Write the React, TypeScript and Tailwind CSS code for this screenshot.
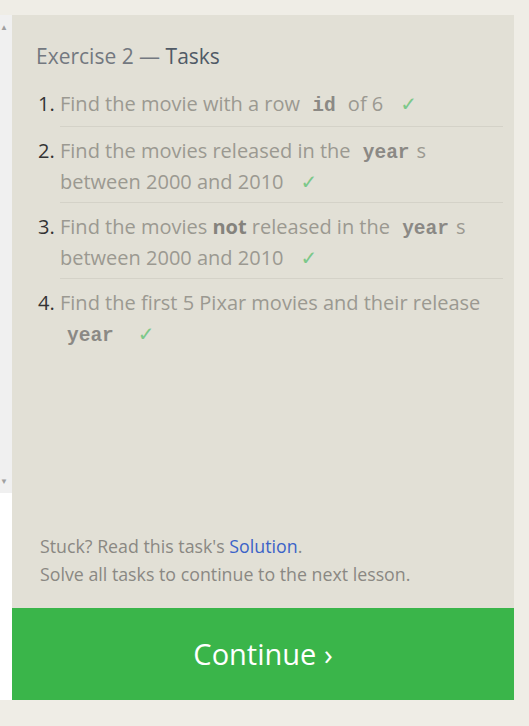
import React from 'react'

const Code = ({ children }: { children: React.ReactNode }) => (
  <code className="px-[7px] font-['Liberation_Mono',monospace] text-[19.5px] font-bold leading-none text-[#8b8985]">{children}</code>
)

const Check = () => <span className="ml-[17px] font-['DejaVu_Sans',sans-serif] text-[20px] leading-none text-[#7cc88a]">✓</span>

const tasks: React.ReactNode[] = [
  <>Find the movie with a row <Code>id</Code> of 6<Check /></>,
  <>Find the movies released in the <Code>year</Code>s<br />between 2000 and 2010<Check /></>,
  <>Find the movies <b className="font-bold text-[#85837d]">not</b> released in the <Code>year</Code>s<br />between 2000 and 2010<Check /></>,
  <>Find the first 5 Pixar movies and their release<br /><Code>year</Code><Check /></>,
]

const App = () => {
  return (
    <div className="flex h-[726px] w-full bg-[#efede6] pt-[15px] font-['Open_Sans',sans-serif]">
      {/* left scroll strip */}
      <div className="flex h-[685px] w-[12px] flex-col">
        <div className="flex h-[478px] flex-col justify-between bg-[#f0f0f0] py-[8px] text-[8px] leading-none text-[#a0a0a0]">
          <span>▲</span>
          <span>▼</span>
        </div>
        <div className="flex-1 bg-white" />
      </div>

      <div className="flex h-[685px] w-[502px] flex-col bg-[#e2e0d6]">
        <div className="flex flex-1 flex-col">
          <h2 className="pl-[24px] pt-[26px] text-[21px] leading-[30px] text-[#737880]">
            Exercise 2 — <span className="text-[#505a66]">Tasks</span>
          </h2>

          <ol className="mt-[9px] pl-[26px] pr-[11px]">
            {tasks.map((t, i) => (
              <li key={i} className="flex text-[20px] leading-[31px]">
                <span className="w-[22px] shrink-0 pt-[8px] text-[#333]">{i + 1}.</span>
                <div
                  className={
                    'flex-1 whitespace-nowrap pt-[8px] text-[#9b9991] ' +
                    (i === 0 ? 'pb-[7px] ' : 'pb-[5px] ') +
                    (i < tasks.length - 1 ? 'border-b border-[#d4d2c8]' : '')
                  }
                >
                  {t}
                </div>
              </li>
            ))}
          </ol>

          <div className="mt-auto pb-[20px] pl-[28px] text-[17.8px] leading-[28px] text-[#8a8883]">
            <p>
              Stuck? Read this task's <a className="text-[#3b63c8]">Solution</a>.
            </p>
            <p>Solve all tasks to continue to the next lesson.</p>
          </div>
        </div>

        <button className="flex h-[92px] items-center justify-center bg-[#3ab54a] text-[29px] text-white">
          Continue ›
        </button>
      </div>
    </div>
  )
}

export default App
